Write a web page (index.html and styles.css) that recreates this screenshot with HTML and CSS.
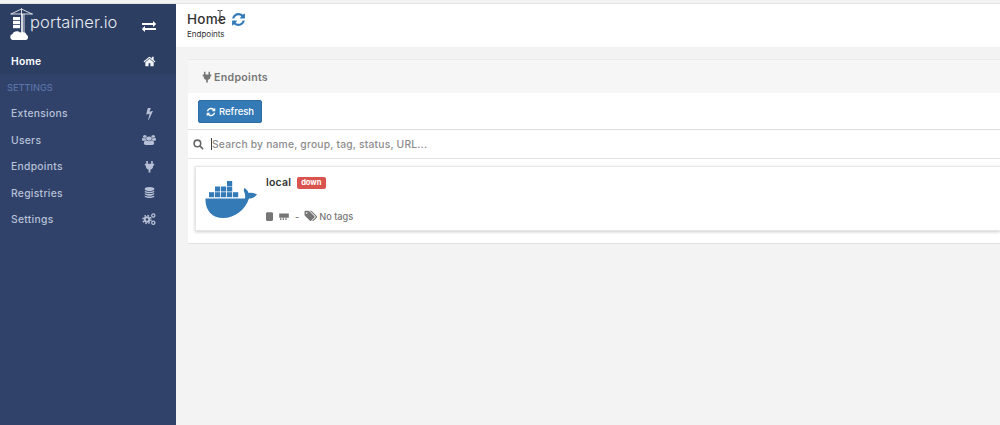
FILE: index.html
```html
<!DOCTYPE html>
<html lang="en">
<head>
<meta charset="utf-8">
<title>Portainer</title>
<link rel="stylesheet" href="styles.css">
</head>
<body>
<div class="app">
  <aside class="sidebar">
    <div class="brand">
      <div class="logo-wrap">
        <svg class="logo-mark" viewBox="0 0 24 32" width="24" height="32">
          <path class="logo-line" d="M1 6 L11.500 1 L22 6 M0.500 6 H23 M11.500 0.500 V6 M14 6 V30"/>
          <path class="logo-line2" d="M12 6 V26"/>
          <rect class="logo-fill" x="3" y="9" width="7" height="3.200"/>
          <rect class="logo-fill" x="3" y="13" width="7" height="3.200"/>
          <rect class="logo-fill" x="3" y="17" width="7" height="3.200"/>
          <path class="logo-fill" d="M3 32 C-0.500 32 -0.500 26.500 2.500 26 C3.500 22.500 8.500 22.500 10 24.500 C12.500 23 16.500 24.500 16.500 27 C19 27.500 18.500 32 15.500 32Z"/>
        </svg>
        <span class="logo-text">portainer.io</span>
      </div>
      <svg class="nav-icon swap" viewBox="0 0 1792 1792" width="14" height="14"><path d="M1792 1184v192q0 13-9.500 22.500t-22.500 9.500h-1376v192q0 13-9.500 22.500t-22.500 9.500q-12 0-24-10l-319-320q-9-9-9-22 0-14 9-23l320-320q9-9 23-9 13 0 22.500 9.500t9.500 22.500v192h1376q13 0 22.500 9.500t9.500 22.500zm0-544q0 14-9 23l-320 320q-9 9-23 9-13 0-22.500-9.500t-9.500-22.500v-192h-1376q-13 0-22.500-9.500t-9.500-22.500v-192q0-13 9.500-22.500t22.500-9.500h1376v-192q0-14 9-23t23-9q12 0 24 10l319 319q9 9 9 23z"/></svg>
    </div>
    <a class="nav-row nav-home">
      <span>Home</span>
      <svg class="nav-icon icon-md" viewBox="0 0 1792 1792" width="13" height="13"><path d="M1472 992v480q0 26-19 45t-45 19h-384v-384h-256v384h-384q-26 0-45-19t-19-45v-480q0-1 .5-3t.5-3l575-474 575 474q1 2 1 6zm223-69l-62 74q-8 9-21 11h-3q-13 0-21-7l-692-577-692 577q-12 8-24 7-13-2-21-11l-62-74q-8-10-7-23.500t11-21.500l719-599q32-26 76-26t76 26l244 204v-195q0-14 9-23t23-9h192q14 0 23 9t9 23v408l219 182q10 8 11 21.500t-7 23.500z"/></svg>
    </a>
    <div class="nav-title">SETTINGS</div>
    <a class="nav-row">
      <span>Extensions</span>
      <svg class="nav-icon icon-md" viewBox="0 0 1792 1792" width="13" height="13"><path d="M1333 566q18 20 7 44l-540 1157q-13 25-42 25-4 0-14-2-17-5-25.500-19t-4.500-30l197-808-406 101q-4 1-12 1-18 0-31-11-18-15-13-39l201-825q4-14 16-23t28-9h328q19 0 32 12.500t13 29.500q0 8-5 18l-171 463 396-98q8-2 12-2 19 0 34 15z"/></svg>
    </a>
    <a class="nav-row">
      <span>Users</span>
      <svg class="nav-icon" viewBox="0 0 1920 1792" width="14" height="10" preserveAspectRatio="none"><path d="M593 896q-162 5-265 128h-134q-82 0-138-40.500t-56-118.500q0-353 124-353 6 0 43.500 21t97.500 42.500 119 21.500q67 0 133-23-5 37-5 66 0 139 81 256zm1071 637q0 120-73 189.500t-194 69.500h-874q-121 0-194-69.500t-73-189.500q0-53 3.500-103.500t14-109 26.500-108.500 43-97.500 62-81 85.500-53.500 111.500-20q10 0 43 21.500t73 48 107 48 135 21.500 135-21.500 107-48 73-48 43-21.500q61 0 111.500 20t85.500 53.500 62 81 43 97.500 26.500 108.500 14 109 3.500 103.500zm-1024-1277q0 106-75 181t-181 75-181-75-75-181 75-181 181-75 181 75 75 181zm704 384q0 159-112.500 271.500t-271.500 112.500-271.500-112.500-112.500-271.500 112.500-271.500 271.500-112.500 271.500 112.500 112.500 271.500zm576 225q0 78-56 118.500t-138 40.500h-134q-103-123-265-128 81-117 81-256 0-29-5-66 66 23 133 23 59 0 119-21.500t97.500-42.500 43.500-21q124 0 124 353zm-128-609q0 106-75 181t-181 75-181-75-75-181 75-181 181-75 181 75 75 181z"/></svg>
    </a>
    <a class="nav-row">
      <span>Endpoints</span>
      <svg class="nav-icon icon-md" viewBox="0 0 14 14" width="13" height="13"><path d="M3.500 1 H5.200 V4 H8.800 V1 H10.500 V4 H12 V6 H11 C11 9 9.500 10 8 10.300 V13.500 H6 V10.300 C4.500 10 3 9 3 6 H2 V4 H3.500Z"/></svg>
    </a>
    <a class="nav-row">
      <span>Registries</span>
      <svg class="nav-icon icon-sm" viewBox="0 0 1792 1792" width="11" height="11"><path d="M896 768q237 0 443-43t325-127v170q0 69-103 128t-280 93.500-385 34.500-385-34.500-280-93.500-103-128v-170q119 84 325 127t443 43zm0 768q237 0 443-43t325-127v170q0 69-103 128t-280 93.500-385 34.500-385-34.500-280-93.500-103-128v-170q119 84 325 127t443 43zm0-384q237 0 443-43t325-127v170q0 69-103 128t-280 93.500-385 34.500-385-34.500-280-93.500-103-128v-170q119 84 325 127t443 43zm0-1152q208 0 385 34.500t280 93.500 103 128v128q0 69-103 128t-280 93.500-385 34.500-385-34.500-280-93.500-103-128v-128q0-69 103-128t280-93.500 385-34.500z"/></svg>
    </a>
    <a class="nav-row">
      <span>Settings</span>
      <svg class="nav-icon cogs" viewBox="0 0 14 14" width="14" height="14">
        <circle class="cog-teeth" cx="5" cy="7.500" r="4"/>
        <circle class="cog-ring" cx="5" cy="7.500" r="2.300"/>
        <circle class="cog-small" cx="11.300" cy="3.500" r="1.600"/>
        <circle class="cog-small" cx="11.300" cy="10.800" r="1.600"/>
      </svg>
    </a>
  </aside>
  <main class="content">
    <header class="page-head">
      <div class="head-line">
        <h1>Home</h1>
        <svg class="sync-lg" viewBox="0 0 1792 1792" width="15" height="15"><path d="M1639 1056q0 5-1 7-64 268-268 434.500t-478 166.500q-146 0-282.500-55t-243.500-157l-129 129q-19 19-45 19t-45-19-19-45v-448q0-26 19-45t45-19h448q26 0 45 19t19 45-19 45l-137 137q71 66 161 102t187 36q134 0 250-65t186-179q11-17 53-117 8-23 30-23h192q13 0 22.500 9.500t9.500 22.500zm25-800v448q0 26-19 45t-45 19h-448q-26 0-45-19t-19-45 19-45l138-138q-148-137-349-137-134 0-250 65t-186 179q-11 17-53 117-8 23-30 23h-199q-13 0-22.500-9.500t-9.500-22.500v-7q65-268 270-434.500t480-166.500q146 0 284 55.500t245 156.500l130-129q19-19 45-19t45 19 19 45z"/></svg>
      </div>
      <div class="crumb">Endpoints</div>
      <svg class="cursor" viewBox="0 0 6 11" width="6" height="11"><path d="M0.500 0.500 H2.300 L3 1.200 L3.700 0.500 H5.500 M3 1 V10 M0.500 10.500 H2.300 L3 9.800 L3.700 10.500 H5.500"/></svg>
    </header>
    <section class="panel">
      <div class="panel-head">
        <svg class="plug" viewBox="0 0 14 14" width="12" height="12"><path d="M3.500 1 H5.200 V4 H8.800 V1 H10.500 V4 H12 V6 H11 C11 9 9.500 10 8 10.300 V13.500 H6 V10.300 C4.500 10 3 9 3 6 H2 V4 H3.500Z"/></svg>
        <span>Endpoints</span>
      </div>
      <div class="toolbar">
        <button class="btn">
          <svg viewBox="0 0 1792 1792" width="10" height="10"><path d="M1639 1056q0 5-1 7-64 268-268 434.500t-478 166.500q-146 0-282.500-55t-243.500-157l-129 129q-19 19-45 19t-45-19-19-45v-448q0-26 19-45t45-19h448q26 0 45 19t19 45-19 45l-137 137q71 66 161 102t187 36q134 0 250-65t186-179q11-17 53-117 8-23 30-23h192q13 0 22.500 9.500t9.500 22.500zm25-800v448q0 26-19 45t-45 19h-448q-26 0-45-19t-19-45 19-45l138-138q-148-137-349-137-134 0-250 65t-186 179q-11 17-53 117-8 23-30 23h-199q-13 0-22.500-9.500t-9.500-22.500v-7q65-268 270-434.500t480-166.500q146 0 284 55.500t245 156.500l130-129q19-19 45-19t45 19 19 45z"/></svg>
          Refresh
        </button>
      </div>
      <div class="search">
        <svg class="search-icon" viewBox="0 0 12 12" width="11" height="11"><circle cx="4.800" cy="4.800" r="3.600"/><path d="M7.500 7.500 L11 11"/></svg>
        <span class="caret"></span>
        <span class="placeholder">Search by name, group, tag, status, URL...</span>
      </div>
      <div class="list">
        <article class="card">
          <svg class="whale" viewBox="0 0 52 37" width="52" height="37">
            <path d="M0.500 17.500 H40 C40.500 15 40 12.500 39 10.500 C38.500 9 39 8 39.500 7 C41.500 8 43 10 43.500 12 C46 11.500 49.500 12 52 13.500 C50 16.500 46.500 17.500 44 17.500 C40 29 30 37 18 37 C7 37 0 29 0.500 17.500Z"/>
            <rect x="4" y="11.200" width="5.200" height="5"/><rect x="10" y="11.200" width="5.200" height="5"/><rect x="16" y="11.200" width="5.200" height="5"/><rect x="22" y="11.200" width="5.200" height="5"/><rect x="28" y="11.200" width="5.200" height="5"/>
            <rect x="10" y="5.500" width="5.200" height="5"/><rect x="16" y="5.500" width="5.200" height="5"/><rect x="22" y="5.500" width="5.200" height="5"/>
            <rect x="22" y="0" width="5.200" height="5"/>
          </svg>
          <div class="card-body">
            <div class="card-title"><span class="name">local</span><span class="badge">down</span></div>
            <div class="card-meta">
              <svg class="meta-cpu" viewBox="0 0 8 10" width="7" height="9"><path d="M1 0 H7 L8 1 V9 L7 10 H1 L0 9 V1Z"/></svg>
              <svg class="meta-chip" viewBox="0 0 11 8" width="10" height="7"><path d="M0 0.500 H11 V5.500 H0Z M1 6 H2.500 V8 H1Z M4 6 H5.500 V8 H4Z M7 6 H8.500 V8 H7Z"/></svg>
              <span class="dash">-</span>
              <svg class="meta-tag" viewBox="0 0 1920 1792" width="13" height="12"><path d="M512 448q0-53-37.500-90.500t-90.500-37.500-90.500 37.500-37.500 90.500 37.500 90.500 90.500 37.500 90.500-37.500 37.500-90.500zm1067 576q0 53-37 90l-491 492q-39 37-91 37-53 0-90-37l-715-716q-38-37-64.500-101t-26.500-117v-416q0-52 38-90t90-38h416q53 0 117 26.500t102 64.500l715 714q37 39 37 91zm384 0q0 53-37 90l-491 492q-39 37-91 37-36 0-59-14t-53-45l470-470q37-37 37-90 0-52-37-91l-715-714q-38-38-102-64.500t-117-26.500h224q53 0 117 26.500t102 64.500l715 714q37 39 37 91z"/></svg>
              <span class="no-tags">No tags</span>
            </div>
          </div>
        </article>
      </div>
    </section>
  </main>
</div>
</body>
</html>
```

FILE: styles.css
```css
* { box-sizing: border-box; }
html, body { margin: 0; height: 100%; overflow: hidden; }
body {
  background: #f3f3f3;
  font-family: "Inter", "Liberation Sans", sans-serif;
  color: #333;
  padding-top: 3px;
}
.app { display: flex; height: 422px; border-top: 1px solid #e4e4e4; }
.sidebar {
  width: 176px;
  flex: none;
  background: #30426a;
  color: #b7c0d6;
  font-size: 10.300px;
  font-weight: 500;
}
.brand {
  height: 44px;
  background: #2d3e63;
  display: flex;
  align-items: center;
  justify-content: space-between;
  padding-right: 20px;
}
.logo-wrap { display: flex; align-items: center; padding-left: 10px; }
.logo-mark { margin-bottom: 5px; }
.logo-line { fill: none; stroke: #fff; stroke-width: 0.800; }
.logo-line2 { fill: none; stroke: #fff; stroke-width: 1.600; }
.logo-fill { fill: #fff; }
.logo-text {
  color: #e8ebf2;
  font-size: 16.500px;
  font-weight: 300;
  margin: -9px 0 0 -4px;
  letter-spacing: 0.100px;
}
.nav-icon { fill: currentColor; flex: none; }
.icon-sm { margin: 0 1.500px; }
.icon-md { margin: 0 0.500px; }
.swap { fill: #fff; }
.nav-row {
  height: 26.500px;
  display: flex;
  align-items: center;
  justify-content: space-between;
  padding: 0 20px 0 11px;
  letter-spacing: 0.300px;
}
.nav-home { background: #2d3e63; color: #fff; height: 26px; font-weight: 600; }
.nav-home .nav-icon { color: #f0f2f6; }
.nav-title {
  height: 26px;
  padding: 8px 0 0 7px;
  color: #5a72a8;
  font-size: 9.200px;
  font-weight: 500;
}
.cog-teeth { fill: none; stroke: currentColor; stroke-width: 1.500; stroke-dasharray: 1.600 1.540; }
.cog-ring { fill: none; stroke: currentColor; stroke-width: 1.900; }
.cog-small { fill: none; stroke: currentColor; stroke-width: 1.300; }
.content { flex: 1; min-width: 0; }
.page-head {
  position: relative;
  height: 43px;
  background: #fff;
  padding: 7px 0 0 11px;
}
.head-line { display: flex; align-items: center; gap: 5px; height: 16px; }
h1 {
  margin: 0;
  font-size: 13.500px;
  font-weight: 500;
  letter-spacing: 0.300px;
  color: #333;
}
.sync-lg { fill: #337ab7; }
.crumb { font-size: 8px; margin-top: 2px; color: #333; }
.cursor {
  position: absolute;
  left: 41px;
  top: 6px;
  fill: none;
  stroke: #444;
  stroke-width: 1;
}
.panel {
  margin: 12px 0 0 12px;
  background: #fff;
  border-top: 1px solid #eaeaea;
  border-bottom: 1px solid #e2e2e2;
  height: 185px;
}
.panel-head {
  height: 33px;
  background: #f6f6f6;
  display: flex;
  align-items: center;
  gap: 1px;
  padding: 1px 0 0 13px;
  font-size: 10.600px;
  font-weight: 600;
  color: #767676;
  letter-spacing: 0.300px;
}
.plug { fill: #767676; }
.toolbar {
  height: 37px;
  padding-top: 7px;
  border-bottom: 1px solid #ddd;
}
.btn {
  margin-left: 10px;
  width: 64px;
  height: 23px;
  padding: 0;
  border: 1px solid #2e6da4;
  border-radius: 2px;
  background: #337ab7;
  color: #fff;
  font: 500 9.500px "Inter", "Liberation Sans", sans-serif;
  display: flex;
  align-items: center;
  justify-content: center;
  gap: 3px;
}
.btn svg { fill: #fff; }
.search {
  height: 29px;
  display: flex;
  align-items: center;
  padding-left: 5px;
  border-bottom: 1px solid #e2e2e2;
}
.search-icon { fill: none; stroke: #666; stroke-width: 1.700; }
.caret { width: 1px; height: 12px; background: #444; margin-left: 7px; }
.placeholder { color: #8c8c8c; font-size: 10.300px; letter-spacing: 0.200px; font-weight: 500; }
.list { padding: 7px 0 0 7px; }
.card {
  height: 65px;
  background: #fff;
  border: 1px solid #e6e6e6;
  border-right: 0;
  box-shadow: 0 1px 3px rgba(0, 0, 0, 0.200);
  display: flex;
  padding-left: 9px;
}
.whale { fill: #337ab7; margin-top: 14px; flex: none; }
.card-body { margin-left: 9px; padding-top: 9px; }
.card-title { display: flex; align-items: center; gap: 6px; height: 14px; }
.name { font-size: 10.500px; font-weight: 600; color: #333; letter-spacing: 0.200px; margin-top: -2px; }
.badge {
  background: #d9534f;
  color: #fff;
  font-size: 7.500px;
  font-weight: 700;
  padding: 1px 4px 2px;
  border-radius: 2px;
  line-height: 9px;
  width: 29px;
}
.card-meta {
  display: flex;
  align-items: center;
  margin-top: 20px;
  height: 12px;
  font-size: 9.200px;
  color: #767676;
  font-weight: 500;
}
.card-meta svg { fill: #767676; }
.meta-chip { margin-left: 6px; }
.dash { margin: 0 5px 0 6px; }
.no-tags { margin-left: 2px; }
```
